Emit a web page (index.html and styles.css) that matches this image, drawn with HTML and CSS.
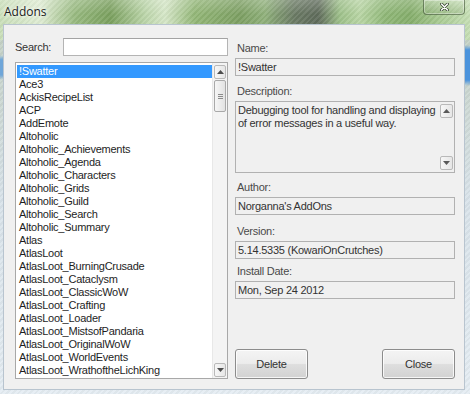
FILE: index.html
```html
<!DOCTYPE html>
<html>

<head>
    <meta charset="UTF-8">
    <title>Addons</title>
    <link rel="stylesheet" href="styles.css">
</head>

<body>
    <div class="window">
        <div class="titlebar">
            <span class="title">Addons</span>
            <div class="close">
                <svg width="9" height="8" viewBox="0 0 9 8">
                    <path d="M1.5 1 L7.5 7 M7.5 1 L1.5 7" stroke="#3b4a34" stroke-width="3" stroke-linecap="round" />
                    <path d="M1.5 1 L7.5 7 M7.5 1 L1.5 7" stroke="#ffffff" stroke-width="1.5" stroke-linecap="round" />
                </svg>
            </div>
        </div>

        <div class="client">
            <!-- colonna sinistra: ricerca e lista -->
            <div class="left-col">
                <div class="search-row">
                    <span class="search-label">Search:</span>
                    <div class="textbox"></div>
                </div>
                <div class="listbox">
                    <div class="items">
                        <div class="item selected">!Swatter</div>
                        <div class="item">Ace3</div>
                        <div class="item">AckisRecipeList</div>
                        <div class="item">ACP</div>
                        <div class="item">AddEmote</div>
                        <div class="item">Altoholic</div>
                        <div class="item">Altoholic_Achievements</div>
                        <div class="item">Altoholic_Agenda</div>
                        <div class="item">Altoholic_Characters</div>
                        <div class="item">Altoholic_Grids</div>
                        <div class="item">Altoholic_Guild</div>
                        <div class="item">Altoholic_Search</div>
                        <div class="item">Altoholic_Summary</div>
                        <div class="item">Atlas</div>
                        <div class="item">AtlasLoot</div>
                        <div class="item">AtlasLoot_BurningCrusade</div>
                        <div class="item">AtlasLoot_Cataclysm</div>
                        <div class="item">AtlasLoot_ClassicWoW</div>
                        <div class="item">AtlasLoot_Crafting</div>
                        <div class="item">AtlasLoot_Loader</div>
                        <div class="item">AtlasLoot_MistsofPandaria</div>
                        <div class="item">AtlasLoot_OriginalWoW</div>
                        <div class="item">AtlasLoot_WorldEvents</div>
                        <div class="item">AtlasLoot_WrathoftheLichKing</div>
                    </div>
                    <div class="vscroll">
                        <div class="sb-btn">
                            <svg width="7" height="4" viewBox="0 0 7 4"><path d="M0 4 L3.5 0 L7 4 Z" fill="#4d4d4d" /></svg>
                        </div>
                        <div class="sb-track">
                            <div class="sb-thumb">
                                <svg width="5" height="5" viewBox="0 0 5 5"><path d="M0 0.5 H5 M0 2.5 H5 M0 4.5 H5" stroke="#8a8a8a" stroke-width="1" /></svg>
                            </div>
                        </div>
                        <div class="sb-btn">
                            <svg width="7" height="4" viewBox="0 0 7 4"><path d="M0 0 L3.5 4 L7 0 Z" fill="#4d4d4d" /></svg>
                        </div>
                    </div>
                </div>
            </div>

            <!-- colonna destra: dettagli dell'addon -->
            <div class="right-col">
                <div class="label first">Name:</div>
                <div class="field">!Swatter</div>

                <div class="label gap8">Description:</div>
                <div class="field memo">
                    <div class="memo-text">Debugging tool for handling and displaying of error messages in a useful way.</div>
                    <div class="vscroll small">
                        <div class="sb-btn">
                            <svg width="7" height="4" viewBox="0 0 7 4"><path d="M0 4 L3.5 0 L7 4 Z" fill="#5a5a5a" /></svg>
                        </div>
                        <div class="sb-track plain"></div>
                        <div class="sb-btn">
                            <svg width="7" height="4" viewBox="0 0 7 4"><path d="M0 0 L3.5 4 L7 0 Z" fill="#5a5a5a" /></svg>
                        </div>
                    </div>
                </div>

                <div class="label gap7">Author:</div>
                <div class="field">Norganna's AddOns</div>

                <div class="label gap9">Version:</div>
                <div class="field">5.14.5335 (KowariOnCrutches)</div>

                <div class="label gap5">Install Date:</div>
                <div class="field">Mon, Sep 24 2012</div>

                <div class="buttons">
                    <button class="btn">Delete</button>
                    <button class="btn">Close</button>
                </div>
            </div>
        </div>
    </div>
</body>

</html>
```

FILE: styles.css
```css
* {
    box-sizing: border-box;
}

html,
body {
    margin: 0;
    padding: 0;
}

body {
    width: 470px;
    height: 394px;
    overflow: hidden;
    font-family: "Liberation Sans", Arial, sans-serif;
    font-size: 11px;
    letter-spacing: -0.25px;
    color: #222;
}

.window {
    height: 394px;
    display: flex;
    flex-direction: column;
    background:
        linear-gradient(to bottom, transparent 45px, #4b93dc 50px, #4b93dc 80px, transparent 86px) right top / 5px 100% no-repeat,
        linear-gradient(to bottom, transparent 55px, #6fa6d9 60px, #6fa6d9 75px, transparent 80px) left top / 3px 100% no-repeat,
        repeating-linear-gradient(135deg, rgba(255, 255, 255, 0.08) 0 2px, rgba(0, 0, 0, 0.03) 2px 4px),
        linear-gradient(to right, #c9dfb9 0px, #dfecd3 40px, #98ba80 75px, #7aa05e 110px, #bcd6aa 145px, #d6e7c8 165px, #92b676 195px, #7c9f62 240px, #8fb07a 265px, #6a7a64 295px, #5f6b5b 318px, #9ec18a 340px, #b9d6a5 360px, #8fb777 385px, #84ad6a 410px, #a9cb93 440px, #c6dfb5 470px) top / 100% 40px no-repeat,
        linear-gradient(to bottom, #c5d2c6 40px, #d9e3ea 200px, #e5edf3 394px);
}

/* barra del titolo */

.titlebar {
    height: 24px;
    flex: none;
    display: flex;
    justify-content: space-between;
    align-items: flex-start;
    background: linear-gradient(to bottom, rgba(255, 255, 255, 0.2), rgba(255, 255, 255, 0) 60%);
}

.title {
    font-family: "Open Sans", "Noto Sans", sans-serif;
    font-size: 12px;
    letter-spacing: 0;
    color: #1b1b1b;
    padding: 3px 0 0 4px;
    text-shadow: 0 0 6px #ffffff, 0 0 3px #ffffff;
}

.close {
    width: 42px;
    height: 15px;
    margin-right: 5px;
    display: flex;
    align-items: center;
    justify-content: center;
    border: 1px solid rgba(50, 70, 40, 0.55);
    border-top: none;
    border-radius: 0 0 4px 4px;
    background: linear-gradient(to bottom, rgba(255, 255, 255, 0.15), rgba(120, 150, 100, 0.25));
    box-shadow: inset 0 0 0 1px rgba(255, 255, 255, 0.35);
}

/* area client */

.client {
    flex: 1;
    margin: 0 5px 4px 3px;
    background-color: #f0f0f0;
    border: 1px solid #b8c4cf;
    display: flex;
    gap: 7px;
    padding: 13px 9px 10px 11px;
}

.left-col {
    width: 213px;
    display: flex;
    flex-direction: column;
}

.search-row {
    height: 18px;
    display: flex;
    align-items: center;
}

.search-label {
    width: 48px;
    color: #333;
}

.textbox {
    flex: 1;
    height: 18px;
    background-color: white;
    border: 1px solid #b4b4b4;
    border-top-color: #a3a3a3;
}

.listbox {
    flex: 1;
    margin-top: 6px;
    background-color: white;
    border: 1px solid #a8a8a8;
    display: flex;
}

.items {
    flex: 1;
    padding: 2px 0 0 1px;
}

.item {
    height: 13px;
    line-height: 13px;
    padding-left: 2px;
    color: #1e1e1e;
    white-space: nowrap;
}

.item.selected {
    background-color: #3399ff;
    color: white;
}

/* barre di scorrimento */

.vscroll {
    width: 15px;
    display: flex;
    flex-direction: column;
    padding: 2px 1px 1px 1px;
    background-color: #f4f4f4;
    border-left: 1px solid #e8e8e8;
}

.vscroll.small {
    padding: 2px 1px 2px 1px;
}

.sb-btn {
    height: 14px;
    flex: none;
    display: flex;
    align-items: center;
    justify-content: center;
    border: 1px solid #b9b9b9;
    border-radius: 2px;
    background: linear-gradient(to right, #f7f7f7, #e6e6e6);
}

.sb-track {
    flex: 1;
    padding-top: 1px;
}

.sb-thumb {
    height: 32px;
    display: flex;
    align-items: center;
    justify-content: center;
    border: 1px solid #a9a9a9;
    border-radius: 2px;
    background: linear-gradient(to right, #f6f6f6, #e2e2e2);
}

/* colonna destra */

.right-col {
    flex: 1;
    display: flex;
    flex-direction: column;
}

.label {
    height: 14px;
    line-height: 14px;
    margin-bottom: 3px;
    padding-left: 2px;
    color: #4a4a4a;
}

.label.first {
    margin-top: 3px;
}

.label.gap5 {
    margin-top: 5px;
}

.label.gap7 {
    margin-top: 7px;
}

.label.gap8 {
    margin-top: 8px;
}

.label.gap9 {
    margin-top: 9px;
}

.field {
    height: 18px;
    line-height: 16px;
    padding-left: 2px;
    border: 1px solid #b1b1b1;
    background-color: #f0f0f0;
    color: #333;
    white-space: nowrap;
}

.field.memo {
    height: 72px;
    display: flex;
    padding: 0;
}

.memo-text {
    flex: 1;
    padding: 2px 0 0 2px;
    line-height: 13px;
    white-space: normal;
}

.memo .vscroll {
    background-color: #f0f0f0;
    border-left: none;
}

.buttons {
    margin-top: auto;
    display: flex;
    justify-content: space-between;
}

.btn {
    width: 73px;
    height: 30px;
    font-family: "Liberation Sans", Arial, sans-serif;
    font-size: 11px;
    letter-spacing: -0.25px;
    color: #333;
    border: 1px solid #8c8c8c;
    border-radius: 3px;
    background: linear-gradient(to bottom, #f4f4f4 0%, #ececec 48%, #dedede 52%, #d2d2d2 100%);
    box-shadow: inset 0 0 0 1px rgba(255, 255, 255, 0.8);
    padding: 0;
}
```
